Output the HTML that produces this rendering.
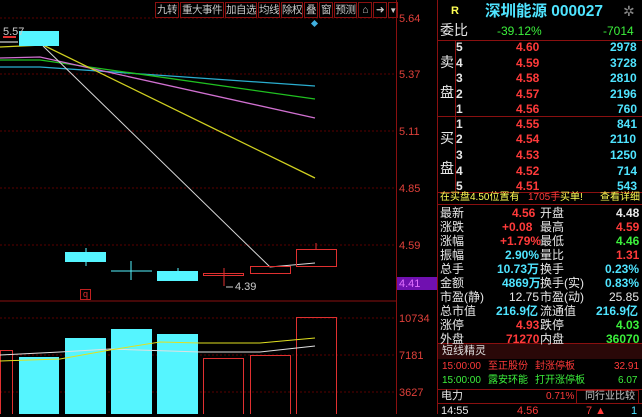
<!DOCTYPE html><html><head><meta charset="utf-8"><style>
body{margin:0;width:642px;height:414px;background:#000;overflow:hidden;position:relative;font-family:"Liberation Sans","Noto Sans CJK SC",sans-serif;}
.a{position:absolute;white-space:nowrap;line-height:1;}
.r{color:#ff3a3a}.c{color:#4fe4ff}.g{color:#3cf03c}.w{color:#e8e8e8}.y{color:#ffff54}
.tb{position:absolute;top:2px;height:16px;border:1px solid #8a1010;color:#c8c8c8;font-size:10.5px;line-height:15px;text-align:center;box-sizing:border-box;white-space:nowrap;overflow:hidden;letter-spacing:-0.5px;}
.ax{position:absolute;left:399px;font-size:11px;color:#e0403a;}
.lb{font-size:12px}
</style></head><body>
<svg width="642" height="414" style="position:absolute;left:0;top:0">
<g stroke="#5a0000" stroke-dasharray="2,2" stroke-width="1">
<line x1="0" y1="18" x2="396" y2="18"/><line x1="0" y1="74" x2="396" y2="74"/><line x1="0" y1="131" x2="396" y2="131"/><line x1="0" y1="188" x2="396" y2="188"/><line x1="0" y1="245" x2="396" y2="245"/>
<line x1="0" y1="318" x2="396" y2="318"/><line x1="0" y1="355" x2="396" y2="355"/><line x1="0" y1="392" x2="396" y2="392"/>
</g>
<line x1="0" y1="301" x2="396" y2="301" stroke="#8a1010"/>
<line x1="396.5" y1="0" x2="396.5" y2="414" stroke="#8a1010"/>
<line x1="437.5" y1="0" x2="437.5" y2="414" stroke="#8a1010"/>
<line x1="438" y1="40.5" x2="642" y2="40.5" stroke="#8a1010"/>
<line x1="438" y1="116.5" x2="642" y2="116.5" stroke="#8a1010"/>
<line x1="438" y1="192.5" x2="642" y2="192.5" stroke="#8a1010"/>
<line x1="438" y1="204.5" x2="642" y2="204.5" stroke="#8a1010"/>
<line x1="455.5" y1="40" x2="455.5" y2="192" stroke="#8a1010"/>
<line x1="438" y1="343.5" x2="642" y2="343.5" stroke="#8a1010"/>
<rect x="438" y="344" width="204" height="15" fill="#2a0808"/>
<line x1="438" y1="389.5" x2="642" y2="389.5" stroke="#8a1010"/>
<line x1="438" y1="403.5" x2="642" y2="403.5" stroke="#8a1010"/>
<rect x="576.5" y="390.5" width="62" height="13" fill="none" stroke="#8a1010"/>
<polyline points="0,67 40,67 315,86" fill="none" stroke="#2aaed0" stroke-width="1.3"/>
<polyline points="0,60 40,60 315,99" fill="none" stroke="#20c020" stroke-width="1.3"/>
<polyline points="0,58 40,57 315,118" fill="none" stroke="#d070d0" stroke-width="1.3"/>
<polyline points="0,47 43,45 315,178" fill="none" stroke="#d0d020" stroke-width="1.3"/>
<polyline points="43,46 270,267 315,263" fill="none" stroke="#d8d8d8" stroke-width="1"/>
<line x1="0" y1="42" x2="18" y2="42" stroke="#fff"/>
<line x1="3" y1="37" x2="16" y2="37" stroke="#e03030" stroke-width="2"/>
<rect x="19" y="31" width="40" height="15" fill="#55f5ff"/>
<line x1="86" y1="248" x2="86" y2="266" stroke="#55f5ff"/><rect x="65" y="252" width="41" height="10" fill="#55f5ff"/>
<line x1="111" y1="271" x2="152" y2="271" stroke="#55f5ff"/><line x1="131" y1="261" x2="131" y2="280" stroke="#55f5ff"/>
<line x1="178" y1="268" x2="178" y2="272" stroke="#55f5ff"/><rect x="157" y="271" width="41" height="10" fill="#55f5ff"/>
<rect x="203.5" y="273.5" width="40" height="2" fill="none" stroke="#e03030"/><line x1="224" y1="268" x2="224" y2="286" stroke="#e03030"/>
<rect x="250.5" y="266.5" width="40" height="7" fill="none" stroke="#e03030"/>
<line x1="316" y1="243" x2="316" y2="249" stroke="#e03030"/><rect x="296.5" y="249.5" width="40" height="17" fill="none" stroke="#e03030"/>
<line x1="226" y1="287" x2="233" y2="287" stroke="#ccc"/>
<rect x="80.5" y="289.5" width="10" height="10" fill="none" stroke="#c02020"/>
<rect x="0.5" y="350.5" width="12" height="64" fill="none" stroke="#e03030"/>
<rect x="19" y="357" width="40" height="57" fill="#55f5ff"/>
<rect x="65" y="338" width="41" height="76" fill="#55f5ff"/>
<rect x="111" y="329" width="41" height="85" fill="#55f5ff"/>
<rect x="157" y="334" width="41" height="80" fill="#55f5ff"/>
<rect x="203.5" y="358.5" width="40" height="56" fill="none" stroke="#e03030"/>
<rect x="250.5" y="355.5" width="40" height="59" fill="none" stroke="#e03030"/>
<rect x="296.5" y="317.5" width="40" height="97" fill="none" stroke="#e03030"/>
<polyline points="0,355 60,352 110,349 200,352 260,352 315,346" fill="none" stroke="#e0e0e0"/>
<polyline points="0,361 60,359 110,350 160,342 200,343 260,343 315,338" fill="none" stroke="#e0e020"/>
<rect x="397" y="277" width="40" height="13" fill="#7010b0"/>
<rect x="312" y="21" width="5" height="5" fill="#40b0e0" transform="rotate(45 314.5 23.5)"/>
</svg>
<div class="tb" style="left:155px;width:24px">九转</div>
<div class="tb" style="left:180px;width:44px">重大事件</div>
<div class="tb" style="left:225px;width:32px">加自选</div>
<div class="tb" style="left:258px;width:22px">均线</div>
<div class="tb" style="left:281px;width:22px">除权</div>
<div class="tb" style="left:304px;width:14px">叠</div>
<div class="tb" style="left:319px;width:14px">窗</div>
<div class="tb" style="left:334px;width:23px">预测</div>
<div class="tb" style="left:358px;width:14px">⌂</div>
<div class="tb" style="left:373px;width:14px">➜</div>
<div class="tb" style="left:388px;width:10px;font-size:8px">▼</div>
<div class="a w" style="left:3px;top:27px;font-size:11px;color:#ccc">5.57</div>
<div class="a w" style="left:235px;top:282px;font-size:11px;color:#ccc">4.39</div>
<div class="a" style="left:83px;top:290px;font-size:9px;color:#e03030">q</div>
<div class="ax" style="top:13px">5.64</div><div class="ax" style="top:69px">5.37</div><div class="ax" style="top:126px">5.11</div><div class="ax" style="top:183px">4.85</div><div class="ax" style="top:240px">4.59</div><div class="ax" style="top:278px;color:#e070ff">4.41</div>
<div class="ax" style="top:313px">10734</div><div class="ax" style="top:350px">7181</div><div class="ax" style="top:387px">3627</div>
<div class="a y" style="left:451px;top:6px;font-size:11px;font-weight:bold">R</div>
<div class="a c" style="left:485px;top:4px;font-size:15.5px;font-weight:bold">深圳能源 000027</div>
<div class="a" style="left:623px;top:4px;font-size:14px;color:#888">✲</div>
<div class="a w" style="left:440px;top:23px;font-size:14px">委比</div>
<div class="a g" style="left:497px;top:25px;font-size:12px">-39.12%</div>
<div class="a g" style="left:603px;top:25px;font-size:12px">-7014</div>
<div class="a w" style="left:440px;top:55px;font-size:14px">卖</div><div class="a w" style="left:440px;top:85px;font-size:14px">盘</div>
<div class="a w" style="left:440px;top:131px;font-size:14px">买</div><div class="a w" style="left:440px;top:161px;font-size:14px">盘</div>
<div style="position:absolute;left:0;top:0;font-size:12px;font-weight:bold">
<div class="a w" style="left:456px;top:41px">5</div><div class="a r" style="left:516px;top:41px">4.60</div><div class="a c" style="left:610px;top:41px">2978</div>
<div class="a w" style="left:456px;top:57px">4</div><div class="a r" style="left:516px;top:57px">4.59</div><div class="a c" style="left:610px;top:57px">3728</div>
<div class="a w" style="left:456px;top:72px">3</div><div class="a r" style="left:516px;top:72px">4.58</div><div class="a c" style="left:610px;top:72px">2810</div>
<div class="a w" style="left:456px;top:88px">2</div><div class="a r" style="left:516px;top:88px">4.57</div><div class="a c" style="left:610px;top:88px">2196</div>
<div class="a w" style="left:456px;top:103px">1</div><div class="a r" style="left:516px;top:103px">4.56</div><div class="a c" style="left:617px;top:103px">760</div>
<div class="a w" style="left:456px;top:118px">1</div><div class="a r" style="left:516px;top:118px">4.55</div><div class="a c" style="left:617px;top:118px">841</div>
<div class="a w" style="left:456px;top:133px">2</div><div class="a r" style="left:516px;top:133px">4.54</div><div class="a c" style="left:610px;top:133px">2110</div>
<div class="a w" style="left:456px;top:149px">3</div><div class="a r" style="left:516px;top:149px">4.53</div><div class="a c" style="left:610px;top:149px">1250</div>
<div class="a w" style="left:456px;top:165px">4</div><div class="a r" style="left:516px;top:165px">4.52</div><div class="a c" style="left:617px;top:165px">714</div>
<div class="a w" style="left:456px;top:180px">5</div><div class="a r" style="left:516px;top:180px">4.51</div><div class="a c" style="left:617px;top:180px">543</div>
</div>
<div class="a y" style="left:440px;top:193px;font-size:10px">在买盘4.50位置有</div>
<div class="a r" style="left:528px;top:193px;font-size:10px">1705手</div>
<div class="a y" style="left:560px;top:193px;font-size:10px">买单!</div>
<div class="a y" style="left:600px;top:193px;font-size:10px">查看详细</div>
<div style="position:absolute;left:0;top:0;font-size:12px">
<div class="a w lb" style="left:440px;top:207px">最新</div><div class="a r" style="left:512px;top:207px;font-weight:bold">4.56</div><div class="a w lb" style="left:540px;top:207px">开盘</div><div class="a w" style="left:616px;top:207px;font-weight:bold">4.48</div>
<div class="a w lb" style="left:440px;top:221px">涨跌</div><div class="a r" style="left:502px;top:221px;font-weight:bold">+0.08</div><div class="a w lb" style="left:540px;top:221px">最高</div><div class="a r" style="left:616px;top:221px;font-weight:bold">4.59</div>
<div class="a w lb" style="left:440px;top:235px">涨幅</div><div class="a r" style="left:500px;top:235px;font-weight:bold">+1.79%</div><div class="a w lb" style="left:540px;top:235px">最低</div><div class="a g" style="left:616px;top:235px;font-weight:bold">4.46</div>
<div class="a w lb" style="left:440px;top:249px">振幅</div><div class="a c" style="left:505px;top:249px;font-weight:bold">2.90%</div><div class="a w lb" style="left:540px;top:249px">量比</div><div class="a r" style="left:616px;top:249px;font-weight:bold">1.31</div>
<div class="a w lb" style="left:440px;top:263px">总手</div><div class="a c" style="left:497px;top:263px;font-weight:bold">10.73万</div><div class="a w lb" style="left:540px;top:263px">换手</div><div class="a c" style="left:605px;top:263px;font-weight:bold">0.23%</div>
<div class="a w lb" style="left:440px;top:277px">金额</div><div class="a c" style="left:502px;top:277px;font-weight:bold">4869万</div><div class="a w lb" style="left:540px;top:277px">换手(实)</div><div class="a c" style="left:605px;top:277px;font-weight:bold">0.83%</div>
<div class="a w lb" style="left:440px;top:291px">市盈(静)</div><div class="a w" style="left:509px;top:291px">12.75</div><div class="a w lb" style="left:540px;top:291px">市盈(动)</div><div class="a w" style="left:609px;top:291px">25.85</div>
<div class="a w lb" style="left:440px;top:305px">总市值</div><div class="a c" style="left:496px;top:305px;font-weight:bold">216.9亿</div><div class="a w lb" style="left:540px;top:305px">流通值</div><div class="a c" style="left:596px;top:305px;font-weight:bold">216.9亿</div>
<div class="a w lb" style="left:440px;top:319px">涨停</div><div class="a r" style="left:516px;top:319px;font-weight:bold">4.93</div><div class="a w lb" style="left:540px;top:319px">跌停</div><div class="a g" style="left:616px;top:319px;font-weight:bold">4.03</div>
<div class="a w lb" style="left:440px;top:333px">外盘</div><div class="a r" style="left:506px;top:333px;font-weight:bold">71270</div><div class="a w lb" style="left:540px;top:333px">内盘</div><div class="a g" style="left:606px;top:333px;font-weight:bold">36070</div>
</div>
<div class="a w" style="left:442px;top:346px;font-size:11px;color:#ddd">短线精灵</div>
<div style="position:absolute;left:0;top:0;font-size:10px">
<div class="a r" style="left:442px;top:362px">15:00:00</div><div class="a r" style="left:488px;top:362px">至正股份</div><div class="a r" style="left:535px;top:362px">封涨停板</div><div class="a r" style="left:614px;top:362px">32.91</div>
<div class="a g" style="left:442px;top:376px">15:00:00</div><div class="a g" style="left:488px;top:376px">露安环能</div><div class="a g" style="left:535px;top:376px">打开涨停板</div><div class="a g" style="left:618px;top:376px">6.07</div>
</div>
<div class="a w" style="left:441px;top:391px;font-size:11px">电力</div>
<div class="a r" style="left:546px;top:392px;font-size:10px">0.71%</div>
<div class="a w" style="left:585px;top:392px;font-size:10px;color:#ccc">同行业比较</div>
<div class="a w" style="left:441px;top:406px;font-size:11px">14:55</div>
<div class="a r" style="left:517px;top:406px;font-size:11px">4.56</div>
<div class="a r" style="left:586px;top:406px;font-size:11px">7 ▲</div>
<div class="a c" style="left:631px;top:406px;font-size:11px">1</div>
</body></html>
